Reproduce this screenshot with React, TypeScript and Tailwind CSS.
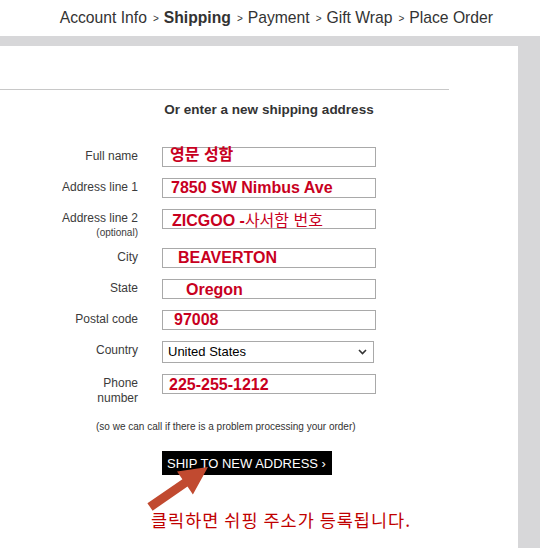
import React from 'react';

const font = { fontFamily: '"Liberation Sans", Arial, "Noto Sans CJK KR", sans-serif' };

interface Row {
  label: React.ReactNode;
  value: React.ReactNode;
  rowH: string;
  pad: string;
  shift: string;
}

function Field({ label, value, rowH, pad, shift }: Row) {
  return (
    <div className={`flex ${rowH}`}>
      <div className="w-[120px] pt-[2px] text-right text-[12px] leading-[14px] text-[#3b3b3b]">{label}</div>
      <div className={`ml-[24px] flex h-[20px] w-[214px] items-center border border-[#a9a9a9] ${pad}`}>
        <span className={`relative whitespace-nowrap text-[16px] font-bold leading-none text-[#c8001e] ${shift}`}>
          {value}
        </span>
      </div>
    </div>
  );
}

export default function App() {
  return (
    <div className="relative h-[548px] w-[549px] overflow-hidden bg-white" style={font}>
      {/* breadcrumb */}
      <div className="flex h-[36px] items-center justify-end pr-[56px] text-[15.7px] text-[#333]">
        <span>Account Info</span>
        <span className="ml-[6px] mr-[5px] text-[10px]">&gt;</span>
        <span className="font-bold">Shipping</span>
        <span className="ml-[6px] mr-[5px] text-[10px]">&gt;</span>
        <span>Payment</span>
        <span className="ml-[6px] mr-[5px] text-[10px]">&gt;</span>
        <span>Gift Wrap</span>
        <span className="ml-[6px] mr-[5px] text-[10px]">&gt;</span>
        <span>Place Order</span>
      </div>

      <div className="h-[512px] w-[540px] bg-[#d7d7d9] pr-[22px] pt-[10px]">
        <div className="h-full bg-white pt-[43px]">
          <div className="h-px w-[449px] bg-[#c8c8c8]" />
          <div className="mt-[11px] flex h-[460px]">
            <div className="ml-[18px] w-px bg-[#c8c8c8]" />
            <div className="flex flex-col">
              <div className="mt-[1px] w-[502px] text-center text-[13.5px] font-bold leading-[16px] text-[#333]">
                Or enter a new shipping address
              </div>

              <div className="mt-[29px] flex flex-col">
                <Field label="Full name" value={<span className="font-semibold">영문 성함</span>} rowH="h-[31px]" pad="pl-[7px]" shift="-top-[2px]" />
                <Field label="Address line 1" value="7850 SW Nimbus Ave" rowH="h-[31px]" pad="pl-[8px]" shift="top-0" />
                <Field
                  label={
                    <>
                      <div>Address line 2</div>
                      <div className="text-[10px] leading-[16px]">(optional)</div>
                    </>
                  }
                  value={
                    <>
                      ZICGOO -<span className="font-normal">사서함 번호</span>
                    </>
                  }
                  rowH="h-[39px]"
                  pad="pl-[9px]"
                  shift="top-[2px]"
                />
                <Field label="City" value="BEAVERTON" rowH="h-[31px]" pad="pl-[15px]" shift="top-0" />
                <Field label="State" value="Oregon" rowH="h-[31px]" pad="pl-[23px]" shift="top-[1px]" />
                <Field label="Postal code" value="97008" rowH="h-[31px]" pad="pl-[11px]" shift="top-0" />

                <div className="flex h-[33px]">
                  <div className="w-[120px] pt-[2px] text-right text-[12px] leading-[14px] text-[#3b3b3b]">Country</div>
                  <div className="ml-[24px] flex h-[22px] w-[212px] items-center justify-between border border-[#a9a9a9] pl-[5px] pr-[6px] text-[13px] text-black">
                    <span>United States</span>
                    <svg width="9" height="6" viewBox="0 0 9 6" fill="none" stroke="#333" strokeWidth="1.6">
                      <path d="M1 1l3.5 3.5L8 1" />
                    </svg>
                  </div>
                </div>

                <div className="flex h-[40px]">
                  <div className="w-[120px] pt-[2px] text-right text-[12px] leading-[15px] text-[#3b3b3b]">
                    Phone
                    <br />
                    number
                  </div>
                  <div className="ml-[24px] flex h-[20px] w-[214px] items-center border border-[#a9a9a9] pl-[6px]">
                    <span className="relative top-[1px] whitespace-nowrap text-[16px] font-bold leading-none text-[#c8001e]">
                      225-255-1212
                    </span>
                  </div>
                </div>
              </div>

              <div className="ml-[78px] mt-[7px] text-[10px] leading-[12px] text-[#333]">
                (so we can call if there is a problem processing your order)
              </div>

              <div className="ml-[144px] mt-[18px] flex h-[24px] w-[170px] items-center bg-black pl-[5px] pt-px text-[13px] text-white">
                SHIP TO NEW ADDRESS ›
              </div>

              <div
                className="ml-[133px] mt-[34px] text-[17.5px] leading-[22px] tracking-[1px] text-[#c00000]"
                style={{ fontFamily: '"Noto Sans CJK KR", sans-serif' }}
              >
                클릭하면 쉬핑 주소가 등록됩니다.
              </div>
            </div>
          </div>
        </div>
      </div>

      {/* annotation arrow */}
      <svg className="absolute left-0 top-0" width="549" height="548" viewBox="0 0 549 548">
        <polygon
          points="147.4,503.3 182.4,479.2 177,471.4 208,467 192.9,494.4 187.5,486.6 152.6,510.7"
          fill="#c14a30"
        />
      </svg>
    </div>
  );
}
